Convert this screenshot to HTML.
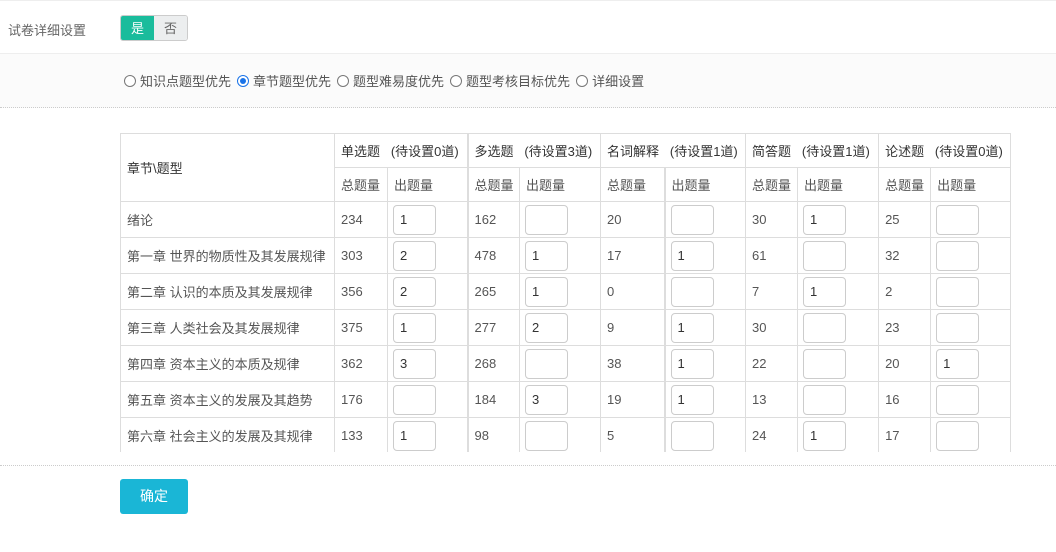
<!DOCTYPE html>
<html><head><meta charset="utf-8"><style>
*{box-sizing:border-box;margin:0;padding:0}
body{width:1056px;height:552px;background:#fff;font-family:"Liberation Sans","Noto Sans CJK SC",sans-serif;font-size:13px;color:#555;position:relative;overflow:hidden}
.top{position:absolute;left:0;top:0;width:1056px;height:54px;border-top:1px solid #eee;border-bottom:1px solid #eee}
.lbl{position:absolute;left:8px;top:19px;color:#666}
.sw{position:absolute;left:120px;top:14px;width:68px;height:26px;border:1px solid #ccc;border-radius:3px;overflow:hidden;display:flex}
.sw span{flex:1;text-align:center;line-height:25px}
.sw .on{background:#1abc9c;color:#fff}.sw .off{background:#eceeef;color:#666}
.band{position:absolute;left:0;top:54px;width:1056px;height:54px;background:#fbfbfb;border-bottom:1px dotted #ccc}
.radios{position:absolute;left:124px;top:17px;display:flex;color:#555}
.radios label{display:flex;align-items:center;margin-right:6px}
.r{width:12px;height:12px;border:1px solid #777;border-radius:50%;margin-right:4px;position:relative;background:#fff}
.r.c{border-color:#1a73e8}.r.c:after{content:"";position:absolute;left:2px;top:2px;width:6px;height:6px;border-radius:50%;background:#1a73e8}
.wrap{position:absolute;left:120px;top:133px;width:891px;height:319px;overflow:hidden}
table{border-collapse:collapse;table-layout:fixed;width:890px}
td{border:1px solid #ddd;padding:0 0 0 6px;white-space:nowrap;height:36px;overflow:hidden}
td.i{padding-left:5px}
tr.h td{height:34px;color:#333}
tr.h2 td{color:#555}
td.t{border-left:2px solid #ddd}
.in{display:inline-block;width:43px;height:30px;border:1px solid #ccc;border-radius:4px;vertical-align:middle;padding-left:6px;line-height:28px;color:#333}
.ln{position:absolute;left:0;top:465px;width:1056px;border-top:1px dotted #ccc}
.btn{position:absolute;left:120px;top:479px;width:68px;height:35px;background:#1ab6d6;border-radius:3px;color:#fff;text-align:center;line-height:35px;font-size:14px}
</style></head><body>
<div class="top"><div class="lbl">试卷详细设置</div><div class="sw"><span class="on">是</span><span class="off">否</span></div></div>
<div class="band"><div class="radios">
<label><span class="r"></span>知识点题型优先</label><label><span class="r c"></span>章节题型优先</label><label><span class="r"></span>题型难易度优先</label><label><span class="r"></span>题型考核目标优先</label><label><span class="r"></span>详细设置</label></div></div>
<div class="wrap"><table>
<colgroup><col style="width:214px"><col style="width:53px"><col style="width:80px"><col style="width:52px"><col style="width:81px"><col style="width:64px"><col style="width:81px"><col style="width:52px"><col style="width:81px"><col style="width:52px"><col style="width:80px"></colgroup>
<tr class="h"><td rowspan="2">章节\题型</td><td colspan="2">单选题&nbsp;&nbsp;&nbsp;(待设置0道)</td><td colspan="2" class="t">多选题&nbsp;&nbsp;&nbsp;(待设置3道)</td><td colspan="2">名词解释&nbsp;&nbsp;&nbsp;(待设置1道)</td><td colspan="2">简答题&nbsp;&nbsp;&nbsp;(待设置1道)</td><td colspan="2">论述题&nbsp;&nbsp;&nbsp;(待设置0道)</td></tr>
<tr class="h h2"><td>总题量</td><td>出题量</td><td class="t">总题量</td><td>出题量</td><td>总题量</td><td class="t">出题量</td><td>总题量</td><td>出题量</td><td>总题量</td><td>出题量</td></tr>
<tr><td>绪论</td><td>234</td><td class="i"><span class="in">1</span></td><td class="t">162</td><td class="i"><span class="in"></span></td><td>20</td><td class="t i"><span class="in"></span></td><td>30</td><td class="i"><span class="in">1</span></td><td>25</td><td class="i"><span class="in"></span></td></tr>
<tr><td>第一章 世界的物质性及其发展规律</td><td>303</td><td class="i"><span class="in">2</span></td><td class="t">478</td><td class="i"><span class="in">1</span></td><td>17</td><td class="t i"><span class="in">1</span></td><td>61</td><td class="i"><span class="in"></span></td><td>32</td><td class="i"><span class="in"></span></td></tr>
<tr><td>第二章 认识的本质及其发展规律</td><td>356</td><td class="i"><span class="in">2</span></td><td class="t">265</td><td class="i"><span class="in">1</span></td><td>0</td><td class="t i"><span class="in"></span></td><td>7</td><td class="i"><span class="in">1</span></td><td>2</td><td class="i"><span class="in"></span></td></tr>
<tr><td>第三章 人类社会及其发展规律</td><td>375</td><td class="i"><span class="in">1</span></td><td class="t">277</td><td class="i"><span class="in">2</span></td><td>9</td><td class="t i"><span class="in">1</span></td><td>30</td><td class="i"><span class="in"></span></td><td>23</td><td class="i"><span class="in"></span></td></tr>
<tr><td>第四章 资本主义的本质及规律</td><td>362</td><td class="i"><span class="in">3</span></td><td class="t">268</td><td class="i"><span class="in"></span></td><td>38</td><td class="t i"><span class="in">1</span></td><td>22</td><td class="i"><span class="in"></span></td><td>20</td><td class="i"><span class="in">1</span></td></tr>
<tr><td>第五章 资本主义的发展及其趋势</td><td>176</td><td class="i"><span class="in"></span></td><td class="t">184</td><td class="i"><span class="in">3</span></td><td>19</td><td class="t i"><span class="in">1</span></td><td>13</td><td class="i"><span class="in"></span></td><td>16</td><td class="i"><span class="in"></span></td></tr>
<tr><td>第六章 社会主义的发展及其规律</td><td>133</td><td class="i"><span class="in">1</span></td><td class="t">98</td><td class="i"><span class="in"></span></td><td>5</td><td class="t i"><span class="in"></span></td><td>24</td><td class="i"><span class="in">1</span></td><td>17</td><td class="i"><span class="in"></span></td></tr>
</table></div>
<div class="ln"></div>
<div class="btn">确定</div>
</body></html>
